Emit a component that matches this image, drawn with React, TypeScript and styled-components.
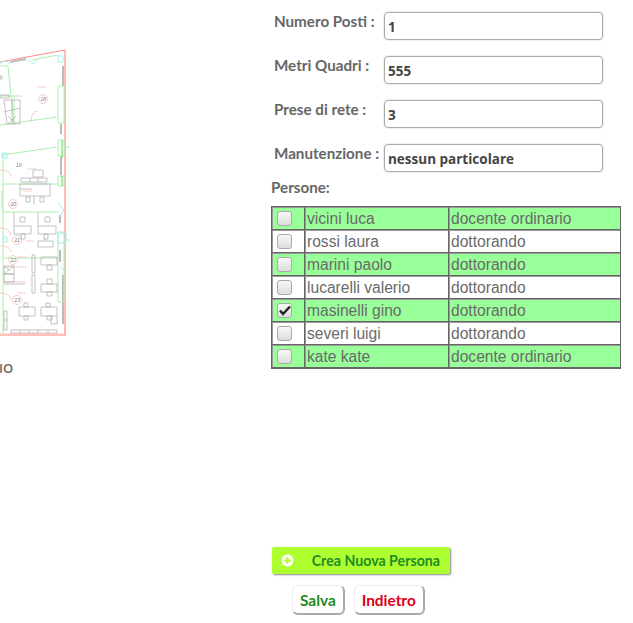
import { createGlobalStyle } from 'styled-components';
import styled from 'styled-components';

const PEOPLE = [
  { id: 1, name: 'vicini luca', role: 'docente ordinario', checked: false },
  { id: 2, name: 'rossi laura', role: 'dottorando', checked: false },
  { id: 3, name: 'marini paolo', role: 'dottorando', checked: false },
  { id: 4, name: 'lucarelli valerio', role: 'dottorando', checked: false },
  { id: 5, name: 'masinelli gino', role: 'dottorando', checked: true },
  { id: 6, name: 'severi luigi', role: 'dottorando', checked: false },
  { id: 7, name: 'kate kate', role: 'docente ordinario', checked: false },
];

const FIELDS = [
  { label: 'Numero Posti :', value: '1' },
  { label: 'Metri Quadri :', value: '555' },
  { label: 'Prese di rete :', value: '3' },
  { label: 'Manutenzione :', value: 'nessun particolare' },
];

const GlobalStyle = createGlobalStyle`
  html, body {
    margin: 0;
    padding: 0;
    background: #fff;
    overflow: hidden;
  }
`;

const Page = styled.div`
  width: 633px;
  height: 623px;
  display: flex;
  font-family: 'Open Sans', sans-serif;
  color: #555;
  overflow: hidden;
`;

const PlanColumn = styled.div`
  width: 271px;
  flex: none;
  display: flex;
  flex-direction: column;
  padding-top: 48px;
  box-sizing: border-box;
`;

const Plan = styled.svg`
  display: block;
  width: 70px;
  height: 292px;
  filter: blur(0.35px);
`;

const PlanCaption = styled.div`
  margin-top: 20px;
  margin-left: -1px;
  font-size: 13px;
  line-height: 16px;
  font-weight: 600;
  color: #666;
`;

const FormColumn = styled.div`
  flex: 1;
  display: flex;
  flex-direction: column;
  padding-top: 12px;
`;

const Fields = styled.div`
  display: flex;
  flex-direction: column;
  gap: 16px;
  margin-left: 3px;
`;

const FieldRow = styled.div`
  display: flex;
  align-items: flex-start;
  height: 28px;
`;

const FieldLabel = styled.label`
  width: 110px;
  flex: none;
  font-family: Lato, sans-serif;
  font-size: 15.2px;
  line-height: 18px;
  font-weight: 700;
  color: #666;
`;

const FieldInput = styled.input`
  width: 219px;
  height: 28px;
  box-sizing: border-box;
  padding: 1px 3px 0;
  border: 1px solid #aaa;
  border-radius: 4px;
  background: #fff;
  box-shadow: 0 0 0 1px #eee;
  font-family: 'Open Sans', sans-serif;
  font-size: 13.5px;
  font-weight: 700;
  color: #444;
  outline: none;
`;

const SectionLabel = styled.div`
  margin-top: 5px;
  height: 29px;
  font-family: Lato, sans-serif;
  font-size: 15.2px;
  line-height: 20px;
  font-weight: 700;
  color: #666;
`;

const PeopleTable = styled.table`
  width: 350px;
  border-collapse: separate;
  border-spacing: 0;
  border: 1px solid #666;
  font-family: 'Liberation Sans', Arial, sans-serif;
  font-size: 15.6px;
  table-layout: fixed;
`;

const PeopleRow = styled.tr<{ $striped: boolean }>`
  height: 23px;
  background: ${p => (p.$striped ? '#9f9' : '#fff')};
`;

const PeopleCell = styled.td`
  padding: 1px 0 0 2px;
  border-bottom: 1px solid #666;
  border-right: 1px solid #666;
  box-shadow: inset 1px 1px 0 #999;
  line-height: 21px;
  height: 23px;
  box-sizing: border-box;
  color: #6a6a6a;
  white-space: nowrap;
  overflow: hidden;

  &:last-child {
    border-right: 0;
  }
`;

const CheckCell = styled(PeopleCell)`
  padding: 0 0 0 5px;
`;

const Check = styled.span<{ $checked: boolean }>`
  position: relative;
  display: block;
  width: 13px;
  height: 13px;
  border: 1px solid #aaa;
  border-radius: 3px;
  background: linear-gradient(#f8f8f8, #ddd);

  svg {
    position: absolute;
    left: -1px;
    top: -1px;
    display: ${p => (p.$checked ? 'block' : 'none')};
  }
`;

const Actions = styled.div`
  margin-top: 178px;
  display: flex;
  flex-direction: column;
  align-items: flex-start;
`;

const CreateButton = styled.button`
  width: 178px;
  height: 27px;
  padding: 0 10px 0 9px;
  margin-left: 1px;
  display: flex;
  align-items: center;
  justify-content: space-between;
  border: 0;
  border-radius: 2px;
  background: #adff2f;
  box-shadow: 1px 1px 2px #888;
  font-family: Lato, sans-serif;
  font-size: 14.2px;
  font-weight: 700;
  color: #228b22;
`;

const ButtonRow = styled.div`
  margin: 11px 0 0 21px;
  display: flex;
  gap: 9px;
`;

const PlainButton = styled.button<{ $tone: string }>`
  height: 30px;
  padding: 0 7px;
  border: 1px solid #eee;
  border-right: 2px solid #aaa;
  border-bottom: 2px solid #aaa;
  border-radius: 6px;
  background: #fff;
  font-family: Lato, sans-serif;
  font-size: 15.4px;
  font-weight: 700;
  color: ${p => p.$tone};
`;

const RoomNumber = styled.text`
  font-family: 'Liberation Sans', sans-serif;
  font-size: 5px;
  font-style: italic;
  fill: #777;
`;

const FloorPlan = () => (
  <Plan viewBox="0 48 70 292">
    <g fill="none" strokeWidth="1">
      <path d="M0 62 L65 50 M65 50 V336 M0 335 H65" stroke="#f88" />
      <path d="M65 52 V335 M0 334 H65" stroke="#f99" strokeDasharray="1 1" />
      <path d="M10 62 L26 59 M63 66 V86 M61 124 V134 M61 157 V175 M60 215 V223 M60 250 V262 M63 275 V324" stroke="#bbb" strokeWidth="2" />
      <g stroke="#aeeeae">
        <path d="M0 66 H8 M32 60 L58 55 M8 66 L14 124 M0 125 L57 117" />
        <path d="M58 86 H64 V123 H58 Z M58 140 H64 V156 H58 Z M58 176 H64 V186 H58 Z M58 232 H64 V302 H58 Z" />
        <path d="M2 155 L57 147 M3 155 V335 M3 184 H58 M3 212 H58 M3 258 H58 M2 190 V210" />
        <path d="M0 96 L22 96 M14 96 V124" />
      </g>
      <path d="M62 140 V158 M62 176 V186" stroke="#5d5" />
      <g stroke="#a5eeee">
        <path d="M58 56 H63 V62 H58 Z M28 60 L33 64 L38 60 M0 64 Q5 58 10 64 M2 153 H7 V158 H2 Z" />
        <path d="M58 203 L64 210 L58 218 M58 233 H66 V243 H58 Z M3 237 H7 V242 H3 Z M60 266 L65 272" />
        <path d="M64 147 H72 M64 240 H74" />
      </g>
      <g stroke="#f7b5b5" strokeWidth="0.7">
        <circle cx="43" cy="99" r="4.5" />
        <circle cx="13" cy="204" r="4.5" />
        <circle cx="17" cy="240" r="4.5" />
        <circle cx="13" cy="260" r="4.5" />
        <circle cx="17" cy="300" r="4.5" />
        <path d="M31 122 Q31 111 38 111 M0 170 Q10 170 11 176 M0 228 Q10 228 11 235 M0 246 Q10 246 11 252 M0 293 Q10 293 11 300" />
        <path d="M3 267 H26 M3 282 H26 M37 87 H46 M27 169 H36 M23 191 H32 M26 241 H34 M18 257 H27 M17 293 H26" />
      </g>
      <g stroke="#aaa" strokeWidth="0.7">
        <path d="M0 95 H9 V98 H0 Z M0 76 H2 V79 H0 Z M4 100 H20 V124 H7 Z M4 112 L20 108 M12 100 V124 M8 116 L16 124 M8 124 L16 116" />
        <path d="M20 184 H50 V196 H20 Z M34 196 V204 M26 197 H30 V202 H26 Z M40 197 H44 V202 H40 Z" />
        <path d="M14 212 V226 H31 V234 H14 V226 M20 217 H25 V222 H20 Z M21 234 H25 V239 H21 Z M38 212 V226 H56 V234 H38 V226 M45 217 H50 V222 H45 Z M44 234 H48 V239 H44 Z" />
        <path d="M38 241 H53 V247 H38 Z M44 240 H46 M32 255 V273 H35 V255 Z M32 275 V293 H35 V275 Z" />
        <path d="M41 257 H57 V265 H41 Z M41 284 H57 V292 H41 Z M47 265 H52 V270 H47 Z M47 279 H52 V284 H47 Z M47 292 H52 V296 H47 Z" />
        <path d="M4 266 H14 V274 H4 Z M4 274 H14 V282 H4 Z M4 266 L9 270 L4 274 M14 266 L9 270 M4 284 H25" />
        <path d="M19 307 H35 V316 H19 Z M24 303 H28 V307 H24 Z M24 316 H28 V320 H24 Z M41 307 H57 V316 H41 Z M57 316 V324 H51 V316 M46 303 H50 V307 H46 Z M47 316 H52 V320 H47 Z" />
        <path d="M4 311 H7 V330 H4 Z M4 320 H7 M11 330 H57 V333 H11 Z M20 330 V333 M29 330 V333 M38 330 V333 M48 330 V333" />
        <path d="M20 189 H32 M21 178 H47 V182 H21 Z M30 178 V182 M38 178 V182 M33 170 H43 V177 H33 Z" />
      </g>
    </g>
    <RoomNumber x="40.5" y="101">18</RoomNumber>
    <RoomNumber x="16" y="167">19</RoomNumber>
    <RoomNumber x="10.5" y="206">20</RoomNumber>
    <RoomNumber x="14.5" y="242">21</RoomNumber>
    <RoomNumber x="10.5" y="262">22</RoomNumber>
    <RoomNumber x="14.5" y="302">23</RoomNumber>
  </Plan>
);

const App = () => {
  return (
    <Page>
      <GlobalStyle />
      <PlanColumn>
        <FloorPlan />
        <PlanCaption>IO</PlanCaption>
      </PlanColumn>
      <FormColumn>
        <Fields>
          {FIELDS.map(field => (
            <FieldRow key={field.label}>
              <FieldLabel>{field.label}</FieldLabel>
              <FieldInput defaultValue={field.value} />
            </FieldRow>
          ))}
        </Fields>
        <SectionLabel>Persone:</SectionLabel>
        <PeopleTable>
          <colgroup>
            <col width="33" />
            <col width="144" />
            <col />
          </colgroup>
          <tbody>
            {PEOPLE.map((person, index) => (
              <PeopleRow key={person.id} $striped={index % 2 === 0}>
                <CheckCell>
                  <Check $checked={person.checked}>
                    <svg width="15" height="15" viewBox="0 0 15 15">
                      <path d="M3 7.5 L6 11 L13 3.5" fill="none" stroke="#222" strokeWidth="2.4" />
                    </svg>
                  </Check>
                </CheckCell>
                <PeopleCell>{person.name}</PeopleCell>
                <PeopleCell>{person.role}</PeopleCell>
              </PeopleRow>
            ))}
          </tbody>
        </PeopleTable>
        <Actions>
          <CreateButton>
            <svg width="13" height="13" viewBox="0 0 13 13">
              <circle cx="6.5" cy="6.5" r="6" fill="#fff" />
              <path d="M6.5 3 V10 M3 6.5 H10" stroke="#adff2f" strokeWidth="2" />
            </svg>
            Crea Nuova Persona
          </CreateButton>
          <ButtonRow>
            <PlainButton $tone="#228b22">Salva</PlainButton>
            <PlainButton $tone="#e00016">Indietro</PlainButton>
          </ButtonRow>
        </Actions>
      </FormColumn>
    </Page>
  );
};

export default App;
